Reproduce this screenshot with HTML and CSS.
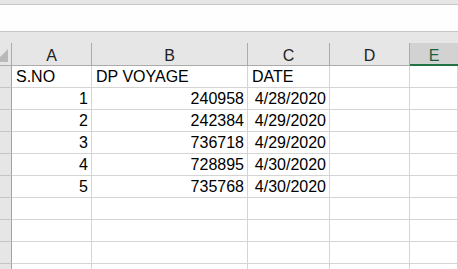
FILE: index.html
```html
<!DOCTYPE html>
<html lang="en">
<head>
    <meta charset="UTF-8">
    <title>Sheet1</title>
    <link rel="stylesheet" href="styles.css">
</head>
<body>
    <div class="top-strip"></div>
    <div class="formula-bar"></div>
    <div class="spacer"></div>
    <div class="sheet">
        <!-- column headers -->
        <div class="corner"><span class="corner-arrow"></span></div>
        <div class="col-head">A</div>
        <div class="col-head">B</div>
        <div class="col-head">C</div>
        <div class="col-head">D</div>
        <div class="col-head selected">E</div>

        <div class="row-head"></div>
        <div class="cell">S.NO</div>
        <div class="cell">DP VOYAGE</div>
        <div class="cell">DATE</div>
        <div class="cell"></div>
        <div class="cell"></div>

        <div class="row-head"></div>
        <div class="cell num">1</div>
        <div class="cell num">240958</div>
        <div class="cell num">4/28/2020</div>
        <div class="cell"></div>
        <div class="cell"></div>

        <div class="row-head"></div>
        <div class="cell num">2</div>
        <div class="cell num">242384</div>
        <div class="cell num">4/29/2020</div>
        <div class="cell"></div>
        <div class="cell"></div>

        <div class="row-head"></div>
        <div class="cell num">3</div>
        <div class="cell num">736718</div>
        <div class="cell num">4/29/2020</div>
        <div class="cell"></div>
        <div class="cell"></div>

        <div class="row-head"></div>
        <div class="cell num">4</div>
        <div class="cell num">728895</div>
        <div class="cell num">4/30/2020</div>
        <div class="cell"></div>
        <div class="cell"></div>

        <div class="row-head"></div>
        <div class="cell num">5</div>
        <div class="cell num">735768</div>
        <div class="cell num">4/30/2020</div>
        <div class="cell"></div>
        <div class="cell"></div>

        <div class="row-head"></div>
        <div class="cell"></div>
        <div class="cell"></div>
        <div class="cell"></div>
        <div class="cell"></div>
        <div class="cell"></div>

        <div class="row-head"></div>
        <div class="cell"></div>
        <div class="cell"></div>
        <div class="cell"></div>
        <div class="cell"></div>
        <div class="cell"></div>

        <div class="row-head"></div>
        <div class="cell"></div>
        <div class="cell"></div>
        <div class="cell"></div>
        <div class="cell"></div>
        <div class="cell"></div>

        <div class="row-head"></div>
        <div class="cell"></div>
        <div class="cell"></div>
        <div class="cell"></div>
        <div class="cell"></div>
        <div class="cell"></div>
    </div>
</body>
</html>
```

FILE: styles.css
```css
*{
    padding: 0;
    margin: 0;
    box-sizing: border-box;
}
body{
    width: 458px;
    height: 269px;
    overflow: hidden;
    background: #e6e6e6;
    font-family: "Liberation Sans", Arial, sans-serif;
    font-size: 16px;
}
.top-strip{
    height: 5px;
    border-bottom: 1px solid #c6c6c6;
    background: #e6e6e6;
}
.formula-bar{
    height: 27px;
    background: #fefefe;
    border-bottom: 1px solid #c6c6c6;
}
.spacer{
    height: 11px;
}
.sheet{
    display: grid;
    grid-template-columns: 12px 80px 156px 82px 80px 1fr;
    grid-template-rows: 23px;
    grid-auto-rows: 22px;
    background: #ffffff;
}
.corner{
    position: relative;
    background: #e6e6e6;
    border-right: 1px solid #ababab;
    border-bottom: 1px solid #ababab;
    overflow: hidden;
}
.corner-arrow{
    position: absolute;
    right: 3px;
    bottom: 3px;
    width: 0;
    height: 0;
    border-left: 13px solid transparent;
    border-bottom: 13px solid #b9b9b9;
}
.col-head{
    background: #e6e6e6;
    border-right: 1px solid #ababab;
    border-bottom: 1px solid #ababab;
    text-align: center;
    padding-top: 3px;
    line-height: 19px;
    color: #222222;
}
.col-head.selected{
    background: #d2d2d2;
    border-right: none;
    border-bottom: 2px solid #217346;
    color: #1d5f3d;
}
.row-head{
    background: #e6e6e6;
    border-right: 1px solid #a3a3a3;
    border-bottom: 1px solid #c4c4c4;
}
.cell{
    border-right: 1px solid #d4d4d4;
    border-bottom: 1px solid #d4d4d4;
    padding: 0 3px 0 4px;
    line-height: 21px;
    color: #000000;
    white-space: nowrap;
    overflow: hidden;
}
.cell.num{
    text-align: right;
}
```
